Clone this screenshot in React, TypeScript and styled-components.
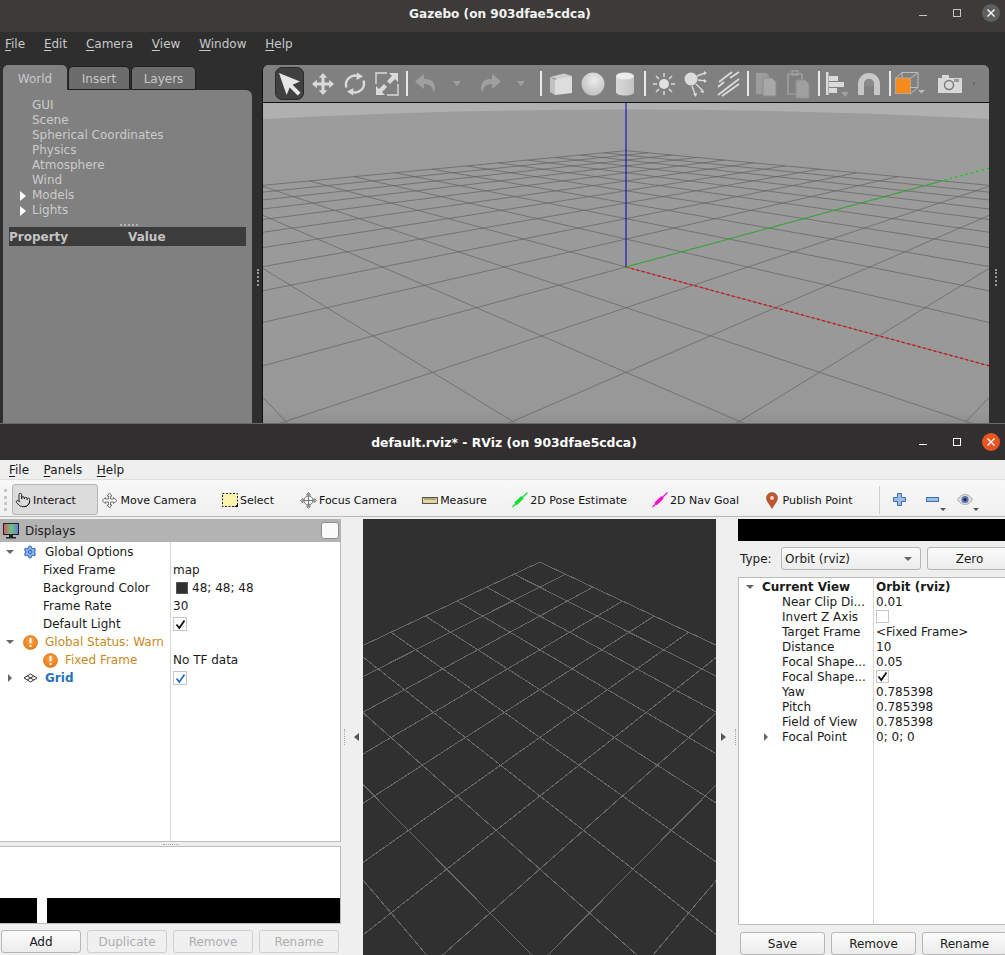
import React from "react";
import styled, { createGlobalStyle } from "styled-components";
import { Pointer, Settings } from "lucide-react";

const Global = createGlobalStyle`
  html, body { margin: 0; padding: 0; width: 1005px; height: 955px; overflow: hidden; background: #efefef; }
  #root { width: 1005px; height: 955px; }
  * { box-sizing: border-box; }
`;

const Page = styled.div`
  width: 1005px;
  height: 955px;
  display: flex;
  flex-direction: column;
  overflow: hidden;
  font-family: "DejaVu Sans", sans-serif;
  font-size: 12px;
`;

/* ---------- scene geometry ---------- */
const gzPitch = 0.275643;
const gzC = Math.cos(gzPitch);
const gzS = Math.sin(gzPitch);
const R2 = Math.SQRT1_2;
type V3 = [number, number, number];

function gzCam(p: V3): V3 {
  const a = p[0] - 5, b = p[1] + 5, h = p[2] - 2;
  return [R2 * (a + b), -gzS * R2 * a + gzS * R2 * b + gzC * h, -gzC * R2 * a + gzC * R2 * b - gzS * h];
}
function gzSeg(a: V3, b: V3): string {
  let A = gzCam(a), B = gzCam(b);
  const near = 0.3;
  if (A[2] < near && B[2] < near) return "";
  const clip = (P: V3, Q: V3): V3 => {
    const t = (near - P[2]) / (Q[2] - P[2]);
    return [P[0] + (Q[0] - P[0]) * t, P[1] + (Q[1] - P[1]) * t, near];
  };
  if (A[2] < near) A = clip(A, B);
  if (B[2] < near) B = clip(B, A);
  const f = 633;
  const pt = (P: V3) => `${(363 + (f * P[0]) / P[2]).toFixed(1)} ${(164 - (f * P[1]) / P[2]).toFixed(1)}`;
  return `M${pt(A)}L${pt(B)}`;
}
let gzGrid = "";
for (let i = -10; i <= 10; i++) {
  gzGrid += gzSeg([i, -10, 0], [i, 10, 0]) + gzSeg([-10, i, 0], [10, i, 0]);
}

function rvPt(x: number, y: number): string {
  const v = [x - 5, y - 5, -7.0711];
  const d = -0.5 * v[0] - 0.5 * v[1] - R2 * v[2];
  const r = -R2 * v[0] + R2 * v[1];
  const u = -0.5 * v[0] - 0.5 * v[1] + R2 * v[2];
  const f = 526.3;
  return `${(176.8 + (f * r) / d).toFixed(1)} ${(218.5 - (f * u) / d).toFixed(1)}`;
}
let rvGrid = "";
for (let i = -5; i <= 5; i++) {
  rvGrid += `M${rvPt(i, -5)}L${rvPt(i, 5)}M${rvPt(-5, i)}L${rvPt(5, i)}`;
}

/* ---------- shared window chrome ---------- */
const TitleBar = styled.div<{ $rviz?: boolean }>`
  flex: none;
  position: relative;
  height: ${(p) => (p.$rviz ? 37 : 32)}px;
  padding: ${(p) => (p.$rviz ? "0 0 0 3px" : "0 5px 4px 0")};
  display: flex;
  align-items: center;
  justify-content: center;
  background: ${(p) => (p.$rviz ? "#312f2f" : "#3d3b39")};
  border-top: ${(p) => (p.$rviz ? "1px solid #6a6a6a" : "none")};
  color: ${(p) => (p.$rviz ? "#ffffff" : "#f2f2f2")};
  font-size: ${(p) => (p.$rviz ? 12.4 : 12.1)}px;
  font-weight: 700;
`;
const WinControls = styled.div<{ $lift: number }>`
  position: absolute;
  right: -3px;
  top: 0;
  bottom: ${(p) => p.$lift}px;
  display: flex;
  align-items: center;
`;
const WinSlot = styled.div`
  width: 34px;
  display: flex;
  align-items: center;
  justify-content: center;
`;
const CloseDisc = styled.div<{ $color: string }>`
  width: 18px;
  height: 18px;
  border-radius: 50%;
  background: ${(p) => p.$color};
  display: flex;
  align-items: center;
  justify-content: center;
`;

function WindowButtons({ close, tone, lift }: { close: string; tone: string; lift: number }) {
  return (
    <WinControls $lift={lift}>
      <WinSlot>
        <svg width="10" height="10" viewBox="0 0 10 10"><rect x="1" y="7" width="8" height="1" fill={tone} /></svg>
      </WinSlot>
      <WinSlot>
        <svg width="10" height="10" viewBox="0 0 10 10"><rect x="1.5" y="1.5" width="7" height="7" fill="none" stroke={tone} /></svg>
      </WinSlot>
      <WinSlot>
        <CloseDisc $color={close}>
          <svg width="10" height="10" viewBox="0 0 10 10"><path d="M1.5 1.5l7 7M8.5 1.5l-7 7" stroke="#fff" strokeWidth="1.4" /></svg>
        </CloseDisc>
      </WinSlot>
    </WinControls>
  );
}

const Mnemonic = styled.span`
  text-decoration: underline;
  text-underline-offset: 2px;
`;

/* ---------- gazebo ---------- */
const GazeboWindow = styled.section`
  flex: none;
  height: 423px;
  display: flex;
  flex-direction: column;
  overflow: hidden;
  background: #2e2e2e;
`;
const GzMenu = styled.nav`
  flex: none;
  height: 28px;
  padding: 0 0 5px 5px;
  display: flex;
  gap: 18.8px;
  align-items: center;
  color: #c8c8c8;
`;
const GzBody = styled.div`
  flex: none;
  height: 363px;
  display: flex;
`;
const GzSide = styled.div`
  flex: none;
  width: 249px;
  margin-left: 3px;
  padding-top: 5px;
  display: flex;
  flex-direction: column;
`;
const GzTabs = styled.div`
  flex: none;
  height: 26px;
  display: flex;
  align-items: flex-end;
  gap: 1px;
  border-bottom: 1px solid #1c1c1c;
  margin-right: 6px;
`;
const GzTab = styled.div<{ $active?: boolean; $w: number }>`
  width: ${(p) => p.$w}px;
  height: ${(p) => (p.$active ? 26 : 24)}px;
  margin-bottom: ${(p) => (p.$active ? -1 : 0)}px;
  padding-top: 1px;
  display: flex;
  align-items: center;
  justify-content: center;
  background: ${(p) => (p.$active ? "#808080" : "#6c6c6c")};
  border: ${(p) => (p.$active ? "none" : "1px solid #1f1f1f")};
  border-radius: 5px 5px 0 0;
  color: #c8c8c8;
`;
const GzPanel = styled.div`
  flex: 1;
  padding-top: 8px;
  background: #808080;
  border-top-right-radius: 6px;
  margin-top: -1px;
  color: #cbcbcb;
`;
const GzTreeRow = styled.div`
  height: 15px;
  display: flex;
  align-items: center;
  padding-left: 17px;
  line-height: 15px;
`;
const GzArrowSlot = styled.span`
  width: 12px;
  flex: none;
  display: flex;
  align-items: center;
`;
const GzArrow = styled.span`
  width: 0;
  height: 0;
  border-left: 6px solid #ffffff;
  border-top: 5.5px solid transparent;
  border-bottom: 5.5px solid transparent;
`;
const GzSash = styled.div`
  width: 18px;
  height: 2px;
  margin: 6px 0 1px 117px;
  border-top: 2px dotted #b4b4b4;
`;
const GzHeader = styled.div`
  margin: 0 6px;
  height: 19px;
  display: grid;
  grid-template-columns: 119px 1fr;
  align-items: center;
  background: #3c3c3c;
  color: #c4c4c4;
  font-weight: 700;
  font-size: 12px;
`;
const GzHandle = styled.div`
  flex: none;
  width: 10px;
  padding: 209px 0 0 5px;
`;
const GripDots = styled.div`
  width: 2px;
  height: 17px;
  border-left: 2px dotted #9a9a9a;
`;
const GzView = styled.div`
  flex: none;
  width: 727px;
  margin-top: 5px;
  display: flex;
  flex-direction: column;
  overflow: hidden;
  border-left: 1px solid #111;
  border-top-left-radius: 6px;
  border-top-right-radius: 6px;
  background: #808080;
`;
const GzToolbar = styled.div`
  flex: none;
  height: 38px;
  padding-left: 12px;
  display: flex;
  align-items: center;
  background: #808080;
  border-bottom: 1px solid #111;
`;
const GzSlot = styled.div<{ $w: number }>`
  flex: none;
  width: ${(p) => p.$w}px;
  height: 33px;
  display: flex;
  align-items: center;
  justify-content: center;
`;
const GzSelected = styled.div`
  width: 29px;
  height: 33px;
  margin-right: 3px;
  display: flex;
  align-items: center;
  justify-content: center;
  background: #404040;
  border: 1px solid #2a2a2a;
  border-radius: 7px;
`;
const GzSep = styled.div`
  width: 2px;
  height: 25px;
  background: #e8e8e8;
`;
const GzScene = styled.svg`
  flex: none;
  display: block;
  width: 726px;
  height: 328px;
`;
const GzRightHandle = styled.div`
  flex: none;
  width: 16px;
  padding: 209px 0 0 6px;
`;

const L = "#dadada";
const D = "#a0a0a0";
const ArrowIcon = () => (
  <svg width="27" height="27" viewBox="0 0 27 27"><path d="M3 3l21 8.5-7.4 3.2 8 8-2.9 2.9-8-8L10.6 25z" fill="#e6e6e6" /></svg>
);
const MoveIcon = () => (
  <svg width="24" height="24" viewBox="0 0 24 24"><path d="M12 1l4.2 4.8h-2.7v4.7h4.7V7.8L23 12l-4.8 4.2v-2.7h-4.7v4.7h2.7L12 23l-4.2-4.8h2.7v-4.7H5.8v2.7L1 12l4.8-4.2v2.7h4.7V5.8H7.800z" fill={L} /></svg>
);
const RotateIcon = () => (
  <svg width="24" height="24" viewBox="0 0 24 24" fill="none">
    <path d="M3.500 15.500A9 9 0 0 1 16 4.500" stroke={L} strokeWidth="2.4" />
    <path d="M20.500 8.500A9 9 0 0 1 8 19.500" stroke={L} strokeWidth="2.4" />
    <path d="M14 0.500l6 4-6.500 3.500zM10 23.500l-6-4 6.500-3.500z" fill={L} />
  </svg>
);
const ScaleIcon = () => (
  <svg width="24" height="24" viewBox="0 0 24 24" fill="none">
    <path d="M1 12V1h11M23 12v11H12" stroke={L} strokeWidth="1.4" />
    <path d="M23 1v9l-3-3-5 5-3-3 5-5-3-3zM1 23v-9l3 3 5-5 3 3-5 5 3 3z" fill={L} />
  </svg>
);
const UndoIcon = ({ flip }: { flip?: boolean }) => (
  <svg width="24" height="22" viewBox="0 0 24 22" style={flip ? { transform: "scaleX(-1)" } : undefined}>
    <path d="M10 1L1 8.500l9 7.500v-5c5-.5 8.500 2 10 9 3-8.500-1-14.500-10-14z" fill={D} />
  </svg>
);
const Caret = ({ color = D }: { color?: string }) => (
  <svg width="8" height="5" viewBox="0 0 8 5"><path d="M0 0h8L4 5z" fill={color} /></svg>
);
const BoxIcon = () => (
  <svg width="24" height="24" viewBox="0 0 24 24">
    <path d="M1 5l14-3.500L23 4 10 7.500z" fill="#cfcfcf" />
    <path d="M1 5l5 2.500V23L1 20z" fill="#c2c2c2" />
    <path d="M6 7.500L23 4v17L6 23z" fill="#dddddd" />
  </svg>
);
const SphereIcon = () => (
  <svg width="24" height="24" viewBox="0 0 24 24">
    <defs><radialGradient id="sph" cx="55%" cy="35%" r="70%"><stop offset="0" stopColor="#ececec" /><stop offset="1" stopColor="#bcbcbc" /></radialGradient></defs>
    <circle cx="12" cy="12" r="11.500" fill="url(#sph)" />
  </svg>
);
const CylinderIcon = () => (
  <svg width="20" height="24" viewBox="0 0 20 24">
    <defs><linearGradient id="cyl" x1="0" x2="1"><stop offset="0" stopColor="#d8d8d8" /><stop offset="1" stopColor="#c4c4c4" /></linearGradient></defs>
    <path d="M1 4v16c0 2 4 3.500 9 3.500s9-1.500 9-3.500V4z" fill="url(#cyl)" />
    <ellipse cx="10" cy="4" rx="9" ry="3.500" fill="#ececec" />
  </svg>
);
const SunIcon = () => (
  <svg width="24" height="24" viewBox="0 0 24 24">
    <circle cx="12" cy="12" r="5" fill="#e2e2e2" />
    <path d="M12 1v4M12 19v4M1 12h4M19 12h4M4 4l3 3M17 17l3 3M20 4l-3 3M7 17l-3 3" stroke={L} strokeWidth="1.5" />
  </svg>
);
const PointLightIcon = () => (
  <svg width="24" height="26" viewBox="0 0 24 26">
    <circle cx="8" cy="8" r="6.500" fill="#dcdcdc" />
    <path d="M14 5l8-3M15 9l8 1M13 13l6 6M9 15l3 8" stroke={L} strokeWidth="1.4" />
    <path d="M21 0l3 2-3 2zM21 8l3 2-3 2zM17 21l4 1-1-4zM10 23l3 3 1-4z" fill={L} />
  </svg>
);
const DirLightIcon = () => (
  <svg width="24" height="26" viewBox="0 0 24 26" fill="none">
    <path d="M3 11L16 1M2 16L8 11M14 7l9-6M2 24L23 8M6 25L23 13" stroke={L} strokeWidth="1.800" />
  </svg>
);
const CopyIcon = () => (
  <svg width="22" height="26" viewBox="0 0 22 26">
    <path d="M1 2h10l3 3v18H1z" fill="#9c9c9c" />
    <path d="M8 7h9l4 4v14H8z" fill="#a8a8a8" stroke="#8a8a8a" />
  </svg>
);
const PasteIcon = () => (
  <svg width="24" height="30" viewBox="0 0 24 30" fill="none">
    <path d="M2 5h14v20H2z" stroke="#a8a8a8" strokeWidth="1.200" />
    <rect x="6" y="2" width="6" height="4" stroke="#a8a8a8" />
    <path d="M10 11h9l4 4v14H10z" fill="#a0a0a0" stroke="#8e8e8e" />
  </svg>
);
const AlignIcon = () => (
  <svg width="24" height="26" viewBox="0 0 24 26">
    <rect x="1" y="1" width="2.500" height="23" fill={L} />
    <rect x="4" y="5" width="9" height="5" fill={L} />
    <rect x="4" y="11" width="15" height="5" fill={L} />
    <rect x="4" y="17" width="8" height="5" fill={L} />
    <path d="M16 21h8l-4 5z" fill={D} />
  </svg>
);
const MagnetIcon = () => (
  <svg width="24" height="24" viewBox="0 0 24 24">
    <path d="M1 23V12a11 11 0 0 1 22 0v11h-6V12a5 5 0 0 0-10 0v11z" fill="#c8c8c8" />
    <path d="M7 12a5 5 0 0 1 10 0v2H7z" fill="#8a8a8a" />
  </svg>
);
const ViewCubeIcon = () => (
  <svg width="31" height="23" viewBox="0 0 31 23" fill="none">
    <path d="M0.500 6.500L7 .5h16v15l-8 6.500M7 .5v15h16M15.500 6.500L23 .5M.5 21.500L7 15.500" stroke="#bcbcbc" strokeWidth="1" />
    <rect x="0.500" y="6" width="15" height="15.500" fill="#f78a1c" stroke="#bcbcbc" strokeWidth="0.600" />
    <path d="M23 18h7l-3.500 3.500z" fill="#bcbcbc" />
  </svg>
);
const CameraIcon = () => (
  <svg width="24" height="18" viewBox="0 0 24 18">
    <path d="M0 3h4V0h7v3h13v15H0z" fill="#d8d8d8" />
    <circle cx="11" cy="10" r="4.500" fill="none" stroke="#7a7a7a" strokeWidth="1.500" />
    <rect x="16" y="4" width="5" height="3" fill="#9a9a9a" />
  </svg>
);
const SmallDots = styled.span`
  width: 2px;
  height: 3px;
  background: #6c6c6c;
`;

function GazeboToolbar() {
  return (
    <GzToolbar>
      <GzSelected><ArrowIcon /></GzSelected>
      <GzSlot $w={32}><MoveIcon /></GzSlot>
      <GzSlot $w={32}><RotateIcon /></GzSlot>
      <GzSlot $w={31}><ScaleIcon /></GzSlot>
      <GzSlot $w={9}><GzSep /></GzSlot>
      <GzSlot $w={30}><UndoIcon /></GzSlot>
      <GzSlot $w={32}><Caret /></GzSlot>
      <GzSlot $w={33}><UndoIcon flip /></GzSlot>
      <GzSlot $w={30}><Caret /></GzSlot>
      <GzSlot $w={9}><GzSep /></GzSlot>
      <GzSlot $w={32}><BoxIcon /></GzSlot>
      <GzSlot $w={32}><SphereIcon /></GzSlot>
      <GzSlot $w={32}><CylinderIcon /></GzSlot>
      <GzSlot $w={8}><GzSep /></GzSlot>
      <GzSlot $w={30}><SunIcon /></GzSlot>
      <GzSlot $w={32}><PointLightIcon /></GzSlot>
      <GzSlot $w={34}><DirLightIcon /></GzSlot>
      <GzSlot $w={6}><GzSep /></GzSlot>
      <GzSlot $w={30}><CopyIcon /></GzSlot>
      <GzSlot $w={34}><PasteIcon /></GzSlot>
      <GzSlot $w={7}><GzSep /></GzSlot>
      <GzSlot $w={30}><AlignIcon /></GzSlot>
      <GzSlot $w={34}><MagnetIcon /></GzSlot>
      <GzSlot $w={7}><GzSep /></GzSlot>
      <GzSlot $w={34}><ViewCubeIcon /></GzSlot>
      <GzSlot $w={46}><CameraIcon /></GzSlot>
      <GzSlot $w={2}><SmallDots /></GzSlot>
    </GzToolbar>
  );
}

const gzTreeItems: [string, boolean][] = [
  ["GUI", false], ["Scene", false], ["Spherical Coordinates", false], ["Physics", false],
  ["Atmosphere", false], ["Wind", false], ["Models", true], ["Lights", true],
];

function Gazebo() {
  return (
    <GazeboWindow>
      <TitleBar>
        Gazebo (on 903dfae5cdca)
        <WindowButtons close="#5f5f5f" tone="#c4c4c4" lift={6} />
      </TitleBar>
      <GzMenu>
        <span><Mnemonic>F</Mnemonic>ile</span>
        <span><Mnemonic>E</Mnemonic>dit</span>
        <span><Mnemonic>C</Mnemonic>amera</span>
        <span><Mnemonic>V</Mnemonic>iew</span>
        <span><Mnemonic>W</Mnemonic>indow</span>
        <span><Mnemonic>H</Mnemonic>elp</span>
      </GzMenu>
      <GzBody>
        <GzSide>
          <GzTabs>
            <GzTab $active $w={64}>World</GzTab>
            <GzTab $w={62}>Insert</GzTab>
            <GzTab $w={65}>Layers</GzTab>
          </GzTabs>
          <GzPanel>
            {gzTreeItems.map(([name, arrow]) => (
              <GzTreeRow key={name}>
                <GzArrowSlot>{arrow && <GzArrow />}</GzArrowSlot>
                {name}
              </GzTreeRow>
            ))}
            <GzSash />
            <GzHeader>
              <span>Property</span>
              <span>Value</span>
            </GzHeader>
          </GzPanel>
        </GzSide>
        <GzHandle><GripDots /></GzHandle>
        <GzView>
          <GazeboToolbar />
          <GzScene viewBox="0 0 726 328">
            <defs>
              <linearGradient id="gzGround" x1="0" y1="0" x2="0" y2="1">
                <stop offset="0" stopColor="#9c9c9c" />
                <stop offset="0.94" stopColor="#989898" />
                <stop offset="0.985" stopColor="#8c8c8c" />
              </linearGradient>
            </defs>
            <rect width="726" height="328" fill="url(#gzGround)" />
            <path d="M0 0H726V16Q363 -3 0 16Z" fill="#b0b0b0" />
            <path d={gzGrid} stroke="#5e5e5e" strokeOpacity="0.65" strokeWidth="1" fill="none" />
            <rect x="362.500" y="0" width="1" height="164" fill="#0000b8" />
            <path d={gzSeg([0, 0, 0], [7, 0, 0])} stroke="#ee0000" strokeWidth="1.300" strokeDasharray="2.500 3" fill="none" />
            <path d={gzSeg([0, 0, 0], [0, 15, 0])} stroke="#00d800" strokeWidth="1.200" strokeDasharray="2.500 3" fill="none" />
          </GzScene>
        </GzView>
        <GzRightHandle><GripDots /></GzRightHandle>
      </GzBody>
    </GazeboWindow>
  );
}

/* ---------- rviz ---------- */
const RvizWindow = styled.section`
  flex: 1;
  min-height: 0;
  display: flex;
  flex-direction: column;
  background: #efefef;
  color: #111;
`;
const RvMenu = styled.nav`
  flex: none;
  height: 20px;
  padding-left: 9px;
  display: flex;
  gap: 14.500px;
  align-items: center;
  background: #efefef;
  border-bottom: 1px solid #dedede;
  color: #1a1a1a;
`;
const RvToolbar = styled.div`
  flex: none;
  height: 37px;
  padding: 4px 0 1px 4px;
  display: flex;
  align-items: center;
  background: linear-gradient(#f8f8f8, #f0f0f0);
  border-bottom: 1px solid #b9b9b9;
  font-size: 11px;
`;
const ToolGrip = styled.div`
  flex: none;
  width: 8px;
  height: 22px;
  border-left: 3px dotted #c6c6c6;
`;
const ToolAction = styled.div<{ $w: number; $active?: boolean }>`
  flex: none;
  width: ${(p) => p.$w}px;
  height: 31px;
  padding: 1px 0 0 ${(p) => (p.$active ? 2 : 0)}px;
  display: flex;
  align-items: center;
  justify-content: ${(p) => (p.$active ? "flex-start" : "center")};
  gap: 2px;
  background: ${(p) => (p.$active ? "#dcdcdc" : "transparent")};
  border: ${(p) => (p.$active ? "1px solid #b4b4b4" : "none")};
  border-radius: 3px;
  white-space: nowrap;
`;
const ToolSep = styled.div`
  flex: none;
  width: 1px;
  height: 28px;
  margin-left: 20px;
  background: #cfcfcf;
`;
const IconAction = styled.div<{ $w: number }>`
  flex: none;
  position: relative;
  width: ${(p) => p.$w}px;
  height: 31px;
  display: flex;
  align-items: center;
  justify-content: center;
`;
const MiniCaret = styled.span<{ $right: number }>`
  position: absolute;
  right: ${(p) => p.$right}px;
  bottom: 4px;
  width: 0;
  height: 0;
  border-top: 3px solid #555;
  border-left: 3px solid transparent;
  border-right: 3px solid transparent;
`;
const RvMain = styled.main`
  flex: 1;
  min-height: 0;
  display: flex;
  overflow: hidden;
`;
const LeftDock = styled.div`
  flex: none;
  width: 341px;
  padding-top: 2px;
  display: flex;
  flex-direction: column;
`;
const DockTitle = styled.div`
  flex: none;
  height: 23px;
  padding: 0 2px 0 3px;
  display: flex;
  align-items: center;
  gap: 6px;
  background: #b3b3b3;
  color: #1c1c1c;
`;
const FloatButton = styled.div`
  margin-left: auto;
  width: 18px;
  height: 17px;
  background: #fafafa;
  border: 1px solid #8f8f8f;
  border-radius: 3px;
`;
const DisplayTree = styled.div`
  flex: none;
  height: 300px;
  background: #fff;
  border-right: 1px solid #bcbcbc;
  border-bottom: 1px solid #bcbcbc;
  background-image: linear-gradient(#d8d8d8, #d8d8d8);
  background-size: 1px 100%;
  background-position: 170px 0;
  background-repeat: no-repeat;
  padding-top: 1px;
`;
const DisplayRow = styled.div`
  height: 18px;
  display: grid;
  grid-template-columns: 171px 1fr;
  align-items: center;
`;
const NameCell = styled.div<{ $indent: number; $tone?: string; $bold?: boolean }>`
  display: flex;
  align-items: center;
  padding-left: ${(p) => p.$indent}px;
  color: ${(p) => p.$tone || "#1a1a1a"};
  font-weight: ${(p) => (p.$bold ? 700 : 400)};
  white-space: nowrap;
`;
const ExpandSlot = styled.span`
  flex: none;
  width: 20px;
  display: flex;
  justify-content: center;
`;
const IconSlot = styled.span`
  flex: none;
  width: 20px;
  margin-right: 5px;
  display: flex;
  justify-content: center;
  align-items: center;
`;
const ValueCell = styled.div`
  padding-left: 2px;
  display: flex;
  align-items: center;
  color: #1a1a1a;
  white-space: nowrap;
`;
const CheckBox = styled.span<{ $tone?: string }>`
  width: 14px;
  height: 14px;
  display: flex;
  align-items: center;
  justify-content: center;
  background: #fff;
  border: 1px solid #c6c6c6;
  color: ${(p) => p.$tone || "#111"};
`;
const Swatch = styled.span`
  width: 12px;
  height: 12px;
  margin: 0 4px 0 3px;
  background: #303030;
  border: 1px solid #555;
`;
const HSash = styled.div`
  flex: none;
  height: 4px;
  display: flex;
  justify-content: center;
  align-items: center;
`;
const SashDots = styled.span`
  width: 16px;
  border-top: 1px dotted #aaa;
`;
const DescBox = styled.div`
  flex: none;
  height: 78px;
  display: flex;
  flex-direction: column;
  justify-content: flex-end;
  background: #fff;
  border-top: 1px solid #bcbcbc;
  border-right: 1px solid #bcbcbc;
  border-bottom: 1px solid #bcbcbc;
`;
const BlackBand = styled.div`
  height: 25px;
  display: grid;
  grid-template-columns: 37px 10px 1fr;
`;
const BlackPiece = styled.div`
  background: #000;
`;
const ButtonRow = styled.div<{ $gap: number; $left: number; $top: number }>`
  flex: none;
  height: 23px;
  margin-top: ${(p) => p.$top}px;
  padding-left: ${(p) => p.$left}px;
  display: flex;
  gap: ${(p) => p.$gap}px;
`;
const QtButton = styled.div<{ $disabled?: boolean; $w: number }>`
  flex: none;
  width: ${(p) => p.$w}px;
  height: 23px;
  display: flex;
  align-items: center;
  justify-content: center;
  background: ${(p) => (p.$disabled ? "#f0f0f0" : "linear-gradient(#fbfbfb, #ececec)")};
  border: 1px solid ${(p) => (p.$disabled ? "#cfcfcf" : "#b6b6b6")};
  border-radius: 3px;
  color: ${(p) => (p.$disabled ? "#aeaeae" : "#1a1a1a")};
`;
const DockSplit = styled.div<{ $pad: number; $gap: number }>`
  flex: none;
  width: 22px;
  padding: 2px 0 0 ${(p) => p.$pad}px;
  display: flex;
  align-items: center;
  gap: ${(p) => p.$gap}px;
`;
const VDots = styled.span`
  flex: none;
  width: 1px;
  height: 16px;
  border-left: 1px dotted #a8a8a8;
`;
const SideArrow = styled.span<{ $left?: boolean }>`
  flex: none;
  width: 0;
  height: 0;
  border-top: 4px solid transparent;
  border-bottom: 4px solid transparent;
  border-left: ${(p) => (p.$left ? "none" : "5px solid #555")};
  border-right: ${(p) => (p.$left ? "5px solid #555" : "none")};
`;
const RvScene = styled.svg`
  flex: none;
  display: block;
  width: 353px;
  height: 436px;
  margin-top: 2px;
  background: #303030;
`;
const RightDock = styled.div`
  flex: none;
  width: 267px;
  padding-top: 2px;
  display: flex;
  flex-direction: column;
  overflow: hidden;
`;
const BlackBar = styled.div`
  flex: none;
  height: 22px;
  background: #000;
`;
const TypeRow = styled.div`
  flex: none;
  height: 23px;
  margin-top: 6px;
  padding-left: 2px;
  display: flex;
  align-items: center;
  color: #1a1a1a;
`;
const TypeLabel = styled.span`
  flex: none;
  width: 41px;
`;
const Combo = styled.div`
  flex: none;
  width: 140px;
  height: 23px;
  margin-right: 6px;
  padding: 0 8px 0 3px;
  display: flex;
  align-items: center;
  justify-content: space-between;
  background: linear-gradient(#fbfbfb, #ececec);
  border: 1px solid #b6b6b6;
  border-radius: 3px;
`;
const ViewTree = styled.div`
  flex: none;
  height: 348px;
  margin-top: 7px;
  padding-top: 1px;
  background: #fff;
  border: 1px solid #bcbcbc;
  border-right: none;
  background-image: linear-gradient(#d8d8d8, #d8d8d8);
  background-size: 1px 100%;
  background-position: 134px 0;
  background-repeat: no-repeat;
`;
const ViewRow = styled.div`
  height: 15px;
  display: grid;
  grid-template-columns: 135px 1fr;
  align-items: center;
`;
const ViewName = styled.div<{ $bold?: boolean; $indent: number }>`
  display: flex;
  align-items: center;
  padding-left: ${(p) => p.$indent}px;
  font-weight: ${(p) => (p.$bold ? 700 : 400)};
  color: #1a1a1a;
  white-space: nowrap;
`;
const ViewExpand = styled.span<{ $w: number }>`
  flex: none;
  width: ${(p) => p.$w}px;
  display: flex;
`;
const ViewValue = styled.div<{ $bold?: boolean }>`
  padding-left: 2px;
  font-weight: ${(p) => (p.$bold ? 700 : 400)};
  color: #1a1a1a;
  white-space: nowrap;
  display: flex;
  align-items: center;
`;
const RightCheck = styled(CheckBox)`
  width: 13px;
  height: 13px;
`;
const TreeDown = styled.span`
  width: 0;
  height: 0;
  border-top: 4px solid #666;
  border-left: 4px solid transparent;
  border-right: 4px solid transparent;
`;
const TreeRight = styled.span`
  width: 0;
  height: 0;
  border-left: 4px solid #666;
  border-top: 4px solid transparent;
  border-bottom: 4px solid transparent;
`;

const CheckMark = () => (
  <svg width="11" height="11" viewBox="0 0 11 11" fill="none">
    <path d="M1.500 5.500L4.300 9 9.500 1.500" stroke="currentColor" strokeWidth="1.800" />
  </svg>
);
const WarnIcon = () => (
  <svg width="15" height="15" viewBox="0 0 15 15">
    <defs>
      <radialGradient id="wrn" cx="50%" cy="35%" r="65%">
        <stop offset="0" stopColor="#f9a34a" />
        <stop offset="1" stopColor="#ec7a12" />
      </radialGradient>
    </defs>
    <circle cx="7.500" cy="7.500" r="7" fill="url(#wrn)" stroke="#c9660e" strokeWidth="0.600" />
    <rect x="6.500" y="3" width="2" height="5.500" fill="#fff" />
    <rect x="6.500" y="10" width="2" height="2" fill="#fff" />
  </svg>
);
const GridIcon = () => (
  <svg width="15" height="10" viewBox="0 0 15 10" fill="none" stroke="#333">
    <path d="M7.500 1L14 5 7.500 9 1 5zM4.250 3l6.500 4M10.750 3l-6.500 4" />
  </svg>
);
const MonitorIcon = () => (
  <svg width="16" height="16" viewBox="0 0 16 16">
    <defs>
      <linearGradient id="scr" x1="0" x2="1">
        <stop offset="0" stopColor="#d8506a" />
        <stop offset="0.5" stopColor="#6cc77a" />
        <stop offset="1" stopColor="#6a78d8" />
      </linearGradient>
    </defs>
    <rect x="0.500" y="0.500" width="15" height="11" fill="url(#scr)" stroke="#222" />
    <path d="M6 12h4v2h3v1.500H3V14h3z" fill="#222" />
  </svg>
);
const MoveCamIcon = () => (
  <svg width="17" height="17" viewBox="0 0 17 17" fill="#f4f4f4" stroke="#666" strokeWidth="0.900">
    <path d="M8.500 1l2.500 3H9.500v3h3V5.500l3.500 3-3.500 3V10h-3v3H11l-2.500 3L6 13h1.500v-3h-3v1.500L1 8.500l3.500-3V7h3V4H6z" />
  </svg>
);
const SelectIcon = () => (
  <svg width="16" height="16" viewBox="0 0 16 16">
    <rect x="0.500" y="1.500" width="15" height="13" fill="#fbf3ae" stroke="#222" strokeDasharray="2 1.500" />
    <path d="M12 15h4v-3z" fill="#111" />
  </svg>
);
const FocusIcon = () => (
  <svg width="17" height="17" viewBox="0 0 17 17" fill="none" stroke="#777">
    <circle cx="8.500" cy="8.500" r="4.500" />
    <path d="M8.500 3v11M3 8.500h11" />
    <path d="M8.500 .5l2 2.500h-4zM8.500 16.500l2-2.500h-4zM.5 8.500L3 6.500v4zM16.500 8.500L14 6.500v4z" fill="#d8d8d8" />
  </svg>
);
const RulerIcon = () => (
  <svg width="16" height="7" viewBox="0 0 16 7">
    <rect x="0.500" y="0.500" width="15" height="6" fill="#e6d69c" stroke="#555" />
    <path d="M3 1v2M5 1v2M7 1v2M9 1v2M11 1v2M13 1v2" stroke="#777" />
  </svg>
);
const GoalArrow = ({ fill }: { fill: string }) => (
  <svg width="16" height="16" viewBox="0 0 16 16" fill="none" stroke={fill}>
    <path d="M0.500 15L15.500 0.500" strokeWidth="1.300" />
    <path d="M3.500 12L10.500 5.200" strokeWidth="3.500" />
  </svg>
);
const PinIcon = () => (
  <svg width="14" height="17" viewBox="0 0 14 17">
    <path d="M6 0.500a5.500 5.500 0 0 1 5.500 5.500c0 3.500-3.500 6.500-5.500 10.500C4 12.500 0.500 9.500 0.500 6A5.500 5.500 0 0 1 6 0.500z" fill="#c2552c" stroke="#7c3a1c" strokeWidth="0.500" />
    <circle cx="6" cy="6" r="2" fill="#f1d9c8" />
  </svg>
);
const PlusIcon = () => (
  <svg width="13" height="13" viewBox="0 0 13 13">
    <path d="M4.500.5h4v4h4v4h-4v4h-4v-4h-4v-4h4z" fill="#9dbde6" stroke="#3a70b4" />
  </svg>
);
const MinusIcon = () => (
  <svg width="13" height="5" viewBox="0 0 13 5"><rect x="0.500" y="0.500" width="12" height="4" fill="#9dbde6" stroke="#3a70b4" /></svg>
);
const EyeIcon = () => (
  <svg width="16" height="11" viewBox="0 0 16 11">
    <path d="M0.500 5.500C3 1.500 6 0.500 8 0.500s5 1 7.500 5C13 9.500 10 10.500 8 10.500s-5-1-7.500-5z" fill="#dcdcdc" stroke="#a8a8a8" />
    <circle cx="8" cy="5.500" r="3.500" fill="#5a72ae" />
    <circle cx="8" cy="5.500" r="1.500" fill="#1c2a50" />
  </svg>
);

function RvizToolbar() {
  return (
    <RvToolbar>
      <ToolGrip />
      <ToolAction $w={86} $active>
        <Pointer size={16} strokeWidth={1.3} color="#111" />Interact
      </ToolAction>
      <ToolAction $w={102}><MoveCamIcon />Move Camera</ToolAction>
      <ToolAction $w={96}><SelectIcon />Select</ToolAction>
      <ToolAction $w={105}><FocusIcon />Focus Camera</ToolAction>
      <ToolAction $w={107}><RulerIcon />Measure</ToolAction>
      <ToolAction $w={123}><GoalArrow fill="#12e02c" />2D Pose Estimate</ToolAction>
      <ToolAction $w={129}><GoalArrow fill="#f012d0" />2D Nav Goal</ToolAction>
      <ToolAction $w={99}><PinIcon />Publish Point</ToolAction>
      <ToolSep />
      <IconAction $w={38}><PlusIcon /></IconAction>
      <IconAction $w={28}><MinusIcon /><MiniCaret $right={0} /></IconAction>
      <IconAction $w={38}><EyeIcon /><MiniCaret $right={5} /></IconAction>
    </RvToolbar>
  );
}

function DisplaysPanel() {
  return (
    <LeftDock>
      <DockTitle>
        <MonitorIcon />
        Displays
        <FloatButton />
      </DockTitle>
      <DisplayTree>
        <DisplayRow>
          <NameCell $indent={0}>
            <ExpandSlot><TreeDown /></ExpandSlot>
            <IconSlot><Settings size={14} color="#3f78c8" fill="#9db9e6" strokeWidth={2.2} /></IconSlot>
            Global Options
          </NameCell>
        </DisplayRow>
        <DisplayRow><NameCell $indent={43}>Fixed Frame</NameCell><ValueCell>map</ValueCell></DisplayRow>
        <DisplayRow><NameCell $indent={43}>Background Color</NameCell><ValueCell><Swatch />48; 48; 48</ValueCell></DisplayRow>
        <DisplayRow><NameCell $indent={43}>Frame Rate</NameCell><ValueCell>30</ValueCell></DisplayRow>
        <DisplayRow><NameCell $indent={43}>Default Light</NameCell><ValueCell><CheckBox><CheckMark /></CheckBox></ValueCell></DisplayRow>
        <DisplayRow>
          <NameCell $indent={0} $tone="#c68a1c">
            <ExpandSlot><TreeDown /></ExpandSlot>
            <IconSlot><WarnIcon /></IconSlot>
            Global Status: Warn
          </NameCell>
        </DisplayRow>
        <DisplayRow>
          <NameCell $indent={40} $tone="#c68a1c">
            <IconSlot><WarnIcon /></IconSlot>
            Fixed Frame
          </NameCell>
          <ValueCell>No TF data</ValueCell>
        </DisplayRow>
        <DisplayRow>
          <NameCell $indent={0} $tone="#2b70bd" $bold>
            <ExpandSlot><TreeRight /></ExpandSlot>
            <IconSlot><GridIcon /></IconSlot>
            Grid
          </NameCell>
          <ValueCell><CheckBox $tone="#2b70bd"><CheckMark /></CheckBox></ValueCell>
        </DisplayRow>
      </DisplayTree>
      <HSash><SashDots /></HSash>
      <DescBox>
        <BlackBand>
          <BlackPiece />
          <span />
          <BlackPiece />
        </BlackBand>
      </DescBox>
      <ButtonRow $gap={6} $left={1} $top={6}>
        <QtButton $w={80}>Add</QtButton>
        <QtButton $w={80} $disabled>Duplicate</QtButton>
        <QtButton $w={80} $disabled>Remove</QtButton>
        <QtButton $w={80} $disabled>Rename</QtButton>
      </ButtonRow>
    </LeftDock>
  );
}

const viewRows: { n: string; v: string; check?: "on" | "off"; arrow?: boolean }[] = [
  { n: "Near Clip Di...", v: "0.01" },
  { n: "Invert Z Axis", v: "", check: "off" },
  { n: "Target Frame", v: "<Fixed Frame>" },
  { n: "Distance", v: "10" },
  { n: "Focal Shape...", v: "0.05" },
  { n: "Focal Shape...", v: "", check: "on" },
  { n: "Yaw", v: "0.785398" },
  { n: "Pitch", v: "0.785398" },
  { n: "Field of View", v: "0.785398" },
  { n: "Focal Point", v: "0; 0; 0", arrow: true },
];

function ViewsPanel() {
  return (
    <RightDock>
      <BlackBar />
      <TypeRow>
        <TypeLabel>Type:</TypeLabel>
        <Combo>Orbit (rviz)<TreeDown /></Combo>
        <QtButton $w={85}>Zero</QtButton>
      </TypeRow>
      <ViewTree>
        <ViewRow>
          <ViewName $bold $indent={7}>
            <ViewExpand $w={16}><TreeDown /></ViewExpand>
            Current View
          </ViewName>
          <ViewValue $bold>Orbit (rviz)</ViewValue>
        </ViewRow>
        {viewRows.map((r, i) => (
          <ViewRow key={i}>
            <ViewName $indent={r.arrow ? 25 : 43}>
              {r.arrow && <ViewExpand $w={18}><TreeRight /></ViewExpand>}
              {r.n}
            </ViewName>
            <ViewValue>
              {r.check ? <RightCheck>{r.check === "on" && <CheckMark />}</RightCheck> : r.v}
            </ViewValue>
          </ViewRow>
        ))}
      </ViewTree>
      <ButtonRow $gap={6} $left={2} $top={7}>
        <QtButton $w={85}>Save</QtButton>
        <QtButton $w={85}>Remove</QtButton>
        <QtButton $w={85}>Rename</QtButton>
      </ButtonRow>
    </RightDock>
  );
}

function Rviz() {
  return (
    <RvizWindow>
      <TitleBar $rviz>
        default.rviz* - RViz (on 903dfae5cdca)
        <WindowButtons close="#e95420" tone="#ffffff" lift={0} />
      </TitleBar>
      <RvMenu>
        <span><Mnemonic>F</Mnemonic>ile</span>
        <span><Mnemonic>P</Mnemonic>anels</span>
        <span><Mnemonic>H</Mnemonic>elp</span>
      </RvMenu>
      <RvizToolbar />
      <RvMain>
        <DisplaysPanel />
        <DockSplit $pad={3} $gap={9}><VDots /><SideArrow $left /></DockSplit>
        <RvScene viewBox="0 0 353 436">
          <path d={rvGrid} stroke="#686868" strokeWidth="1" fill="none" shapeRendering="crispEdges" />
        </RvScene>
        <DockSplit $pad={5} $gap={9}><SideArrow /><VDots /></DockSplit>
        <ViewsPanel />
      </RvMain>
    </RvizWindow>
  );
}

export default function App() {
  return (
    <Page>
      <Global />
      <Gazebo />
      <Rviz />
    </Page>
  );
}
